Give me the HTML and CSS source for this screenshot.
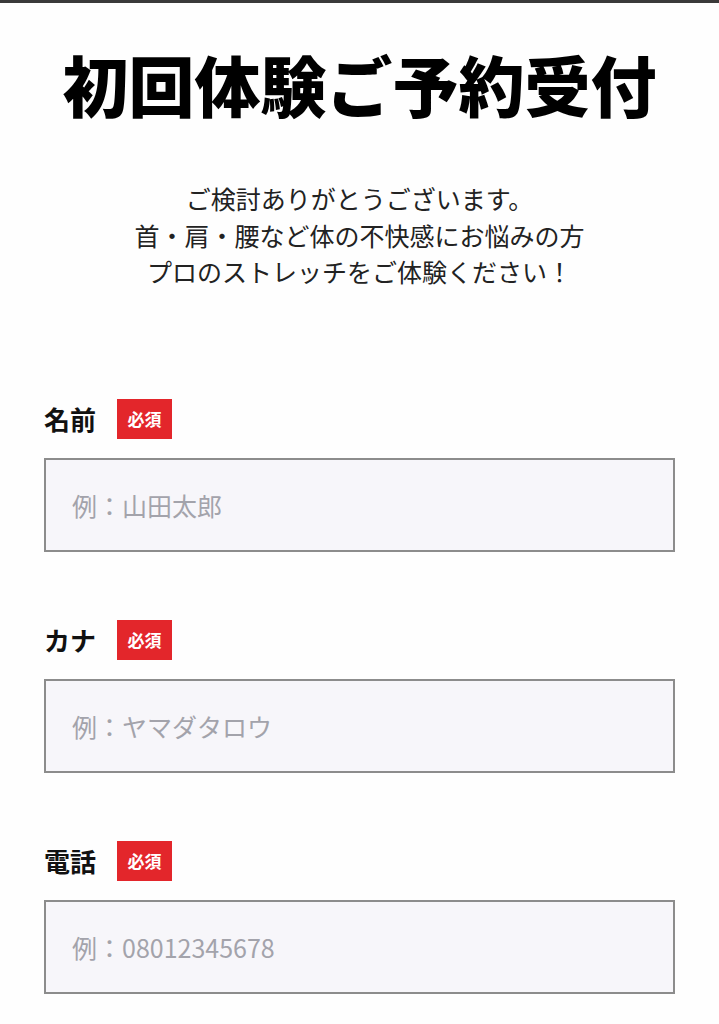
FILE: index.html
```html
<!DOCTYPE html>
<html lang="ja">
<head>
<meta charset="utf-8">
<link rel="stylesheet" href="styles.css">
</head>
<body>
<div class="topbar"></div>
<main class="page">
  <h1 class="title">初回体験ご予約受付</h1>
  <p class="lead">ご検討ありがとうございます。<br>首・肩・腰など体の不快感にお悩みの方<br>プロのストレッチをご体験ください！</p>
  <form class="form">
    <div class="field">
      <div class="label-row"><span class="label">名前</span><span class="badge">必須</span></div>
      <div class="input"><span class="placeholder">例：山田太郎</span></div>
    </div>
    <div class="field">
      <div class="label-row"><span class="label">カナ</span><span class="badge">必須</span></div>
      <div class="input"><span class="placeholder">例：ヤマダタロウ</span></div>
    </div>
    <div class="field">
      <div class="label-row"><span class="label">電話</span><span class="badge">必須</span></div>
      <div class="input"><span class="placeholder">例：08012345678</span></div>
    </div>
  </form>
</main>
</body>
</html>
```
FILE: styles.css
```css
* { box-sizing: border-box; }
html, body { margin: 0; padding: 0; background: #fefefe; }
body {
  font-family: "Noto Sans CJK JP", "Noto Sans", sans-serif;
  color: #111;
}
.topbar { height: 3px; background: #3a3a3a; }
.page { padding: 0 44px; }
.title {
  margin: 0;
  padding-top: 40px;
  text-align: center;
  font-size: 66px;
  font-weight: 900;
  line-height: 80px;
  letter-spacing: 0;
  color: #000;
}
.lead {
  margin: 0;
  padding-top: 57px;
  text-align: center;
  font-size: 25px;
  line-height: 36.5px;
  color: #222;
}
.form { padding-top: 109px; display: flex; flex-direction: column; gap: 68px; }
.field { display: flex; flex-direction: column; gap: 19px; }
.label-row { display: flex; align-items: center; gap: 21px; height: 40px; }
.label { font-size: 26px; font-weight: 700; color: #111; }
.badge {
  width: 55px; height: 40px;
  background: #e3262b;
  color: #fff;
  font-size: 17px;
  font-weight: 700;
  display: flex; align-items: center; justify-content: center;
}
.input {
  height: 94px;
  border: 2px solid #8c8c8c;
  background: #f7f6fa;
  display: flex; align-items: center;
  padding-left: 26px;
}
.placeholder { font-size: 25px; color: #a3a3ab; }
```
